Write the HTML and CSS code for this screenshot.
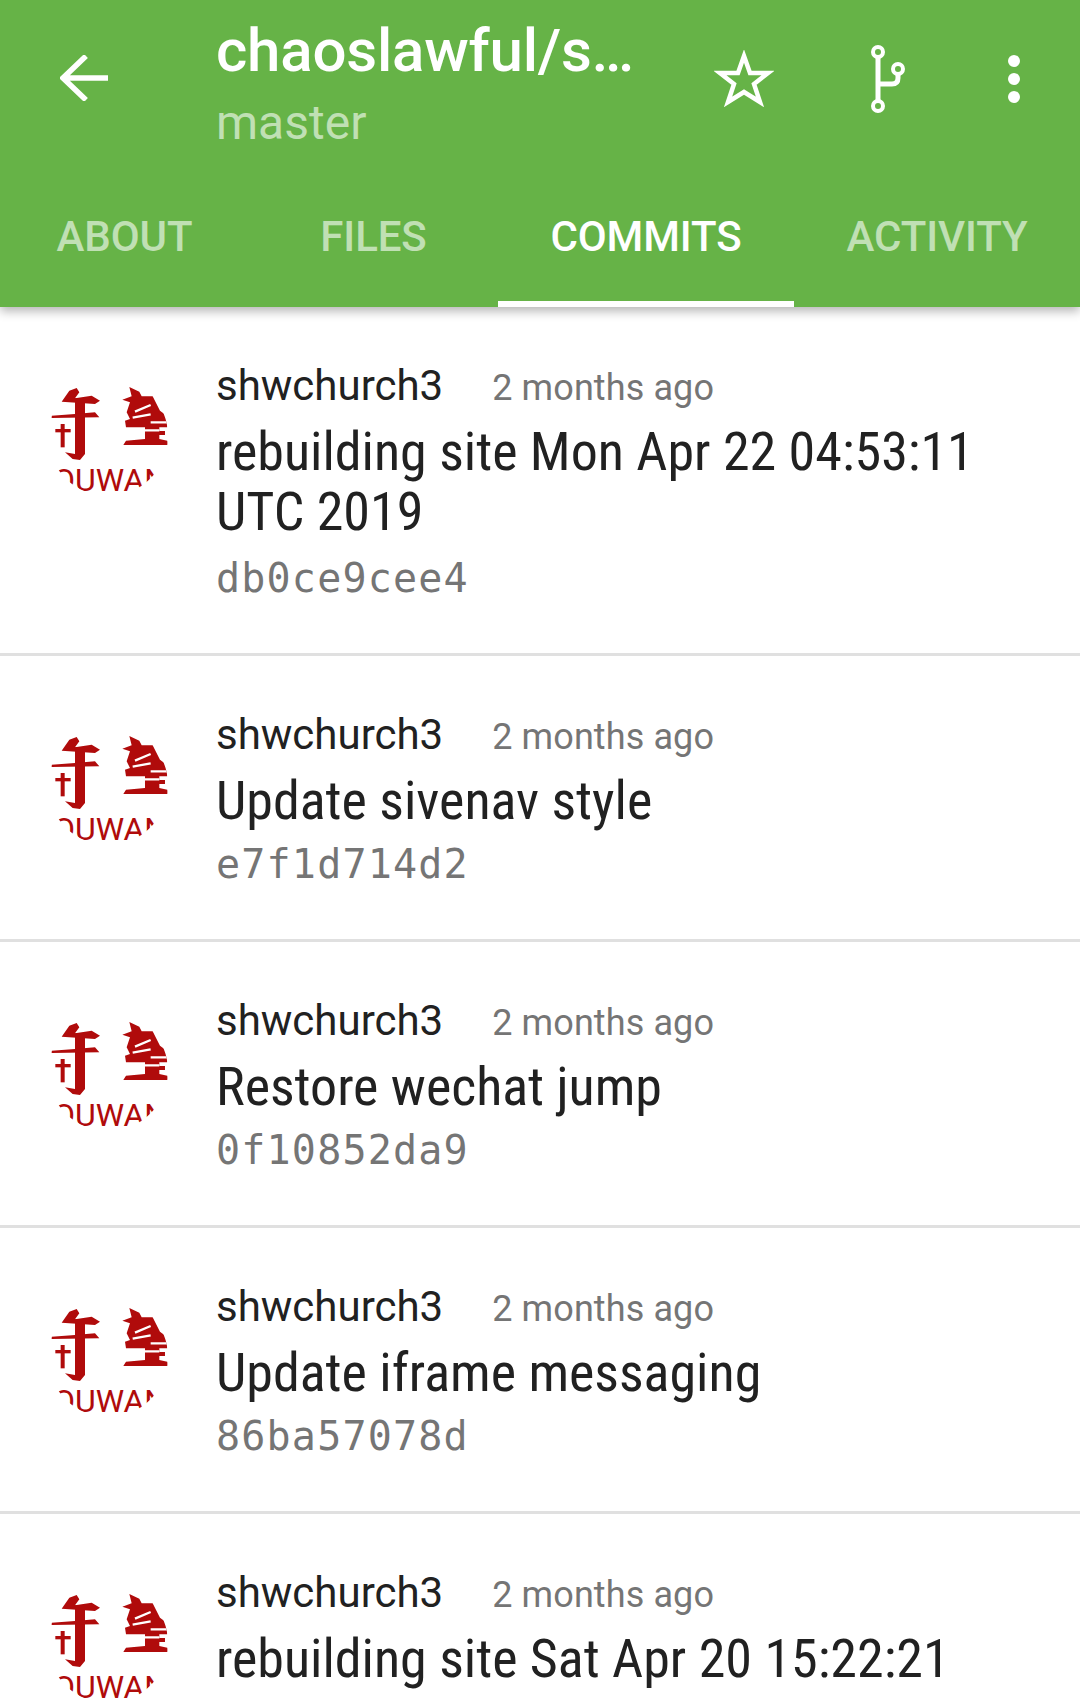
FILE: index.html
```html
<!DOCTYPE html>
<html lang="en">

<head>
    <meta charset="UTF-8">
    <meta name="viewport" content="width=device-width, initial-scale=1.0">
    <title>Commits</title>
    <link rel="stylesheet" href="styles.css">
</head>

<body>
    <!-- Avatar artwork, reused by every row -->
    <svg class="defs" width="0" height="0">
        <defs>
            <symbol id="avatar" viewBox="0 0 120 120">
                <g transform="scale(0.3333) translate(-54 -51)" fill="#b00b0b">
                    <polygon points="118,95 140,87 148,100 135,118 185,110 210,125 195,135 95,128"/>
                    <polygon points="135,118 165,118 165,285 150,303 128,300 105,280 135,285"/>
                    <polygon points="65,170 135,165 195,160 208,175 65,177"/>
                    <rect x="92" y="195" width="12" height="70"/>
                    <rect x="76" y="210" width="46" height="10"/>
                    <polygon points="277,122 305,112 298,84 328,98 335,112 368,112 390,155 410,170 412,205 388,205 388,240 412,245 414,258 280,258 288,245 345,240 345,205 288,205 285,185 300,180 290,160 300,130"/>
                    <path d="M345 222 H405" stroke="#b00b0b" stroke-width="12"/>
                    <path d="M315 158 L362 138 M308 176 L362 166 M362 190 H414 M345 214 H388" stroke="#fff" stroke-width="7" fill="none"/>
                </g>
                <text class="avatar-text" x="5" y="115">OUWAN</text>
            </symbol>
        </defs>
    </svg>

    <header class="app-bar">
        <div class="toolbar">
            <button class="icon-button back" aria-label="Back">
                <svg width="48" height="46" viewBox="0 0 48 46"><path d="M48 23 H4 M26 1 L3 23 L26 45" fill="none" stroke="#fff" stroke-width="5.500"/></svg>
            </button>
            <div class="repo">
                <div class="repo-name">chaoslawful/s…</div>
                <div class="repo-branch">master</div>
            </div>
            <div class="actions">
                <svg class="star" width="60" height="58" viewBox="0 0 60 58"><path d="M30 6 L36 23 L54 23 L40 34 L46 52 L30 42 L14 52 L20 34 L6 23 L24 23 Z" fill="none" stroke="#fff" stroke-width="4.500"/></svg>
                <svg class="fork" width="34" height="68" viewBox="0 0 34 68"><g fill="none" stroke="#fff"><g stroke-width="4"><circle cx="7" cy="7" r="5"/><circle cx="7" cy="61" r="5"/><circle cx="27" cy="24" r="5"/></g><g stroke-width="5"><path d="M7 12 V56"/><path d="M7 39 H21 Q27 39 27 33 V29"/></g></g></svg>
                <svg class="more" width="12" height="48" viewBox="0 0 12 48"><circle cx="6" cy="6" r="6" fill="#fff"/><circle cx="6" cy="24" r="6" fill="#fff"/><circle cx="6" cy="42" r="6" fill="#fff"/></svg>
            </div>
        </div>
        <nav class="tabs">
            <a href="#" class="tab">About</a>
            <a href="#" class="tab">Files</a>
            <a href="#" class="tab active">Commits</a>
            <a href="#" class="tab">Activity</a>
        </nav>
    </header>

    <main class="commit-list">
        <div class="commit">
            <div class="avatar"><svg width="120" height="120"><use href="#avatar"/></svg></div>
            <div class="commit-body">
                <div class="commit-meta"><span class="author">shwchurch3</span><span class="time">2 months ago</span></div>
                <div class="commit-title">rebuilding site Mon Apr 22 04:53:11<br>UTC 2019</div>
                <div class="commit-sha">db0ce9cee4</div>
            </div>
        </div>
        <div class="commit">
            <div class="avatar"><svg width="120" height="120"><use href="#avatar"/></svg></div>
            <div class="commit-body">
                <div class="commit-meta"><span class="author">shwchurch3</span><span class="time">2 months ago</span></div>
                <div class="commit-title">Update sivenav style</div>
                <div class="commit-sha">e7f1d714d2</div>
            </div>
        </div>
        <div class="commit">
            <div class="avatar"><svg width="120" height="120"><use href="#avatar"/></svg></div>
            <div class="commit-body">
                <div class="commit-meta"><span class="author">shwchurch3</span><span class="time">2 months ago</span></div>
                <div class="commit-title">Restore wechat jump</div>
                <div class="commit-sha">0f10852da9</div>
            </div>
        </div>
        <div class="commit">
            <div class="avatar"><svg width="120" height="120"><use href="#avatar"/></svg></div>
            <div class="commit-body">
                <div class="commit-meta"><span class="author">shwchurch3</span><span class="time">2 months ago</span></div>
                <div class="commit-title">Update iframe messaging</div>
                <div class="commit-sha">86ba57078d</div>
            </div>
        </div>
        <div class="commit">
            <div class="avatar"><svg width="120" height="120"><use href="#avatar"/></svg></div>
            <div class="commit-body">
                <div class="commit-meta"><span class="author">shwchurch3</span><span class="time">2 months ago</span></div>
                <div class="commit-title">rebuilding site Sat Apr 20 15:22:21</div>
            </div>
        </div>
    </main>
</body>

</html>
```

FILE: styles.css
```css
html,
body {
    height: 100%;
}

body {
    margin: 0;
    overflow: hidden;
    background-color: #fff;
    font-family: Roboto, sans-serif;
    color: #212121;
}

.defs {
    position: absolute;
}

/* App bar */
.app-bar {
    position: relative;
    z-index: 2;
    height: 307px;
    background-color: #66b347;
    box-shadow: 0 4px 10px rgba(0, 0, 0, 0.3);
}

.toolbar {
    display: flex;
    height: 176px;
    padding-left: 60px;
}

.icon-button {
    width: 156px;
    height: 158px;
    padding: 0;
    border: none;
    background: none;
    text-align: left;
}

.repo {
    width: 498px;
    padding-top: 13px;
}

.repo-name {
    font-size: 60px;
    font-weight: 500;
    line-height: 76px;
    letter-spacing: -0.2px;
    color: #fff;
}

.repo-branch {
    font-size: 48px;
    line-height: 68px;
    color: rgba(255, 255, 255, 0.6);
}

.actions {
    display: flex;
    align-items: center;
    height: 158px;
}

.fork {
    margin-left: 97px;
}

.more {
    margin-left: 103px;
}

/* Tabs */
.tabs {
    display: flex;
    height: 131px;
}

.tab {
    display: flex;
    justify-content: center;
    align-items: center;
    width: 249px;
    height: 121px;
    padding-bottom: 4px;
    font-size: 42px;
    font-weight: 500;
    letter-spacing: -0.1px;
    text-transform: uppercase;
    text-decoration: none;
    white-space: nowrap;
    color: rgba(255, 255, 255, 0.6);
}

.tab:nth-child(3) {
    width: 296px;
}

.tab:nth-child(4) {
    width: 286px;
}

.tab.active {
    color: #fff;
    border-bottom: 6px solid #fff;
}

/* Commit rows */
.commit {
    display: flex;
    padding: 54px 0 53px 48px;
    border-bottom: 3px solid #e0e0e0;
}

.avatar {
    flex: none;
    width: 120px;
    height: 120px;
    margin-top: 15px;
    margin-right: 49px;
    border-radius: 50%;
    overflow: hidden;
}

.avatar-text {
    font-family: Roboto, sans-serif;
    font-size: 32px;
    fill: #b00b0b;
}

.commit-body {
    margin-left: -1px;
}

.author {
    font-size: 42px;
    color: #212121;
}

.time {
    margin-left: 49px;
    font-size: 36px;
    letter-spacing: 0.1px;
    color: #757575;
}

.commit-title {
    margin-top: 12px;
    font-size: 54px;
    font-stretch: 75%;
    line-height: 60px;
    color: #212121;
}

.commit-sha {
    margin-top: 11px;
    font-family: "DejaVu Sans Mono", monospace;
    font-size: 40px;
    line-height: 44px;
    letter-spacing: 1.200px;
    color: #757575;
}

.commit:first-child .commit-sha {
    margin-top: 14px;
}
```
